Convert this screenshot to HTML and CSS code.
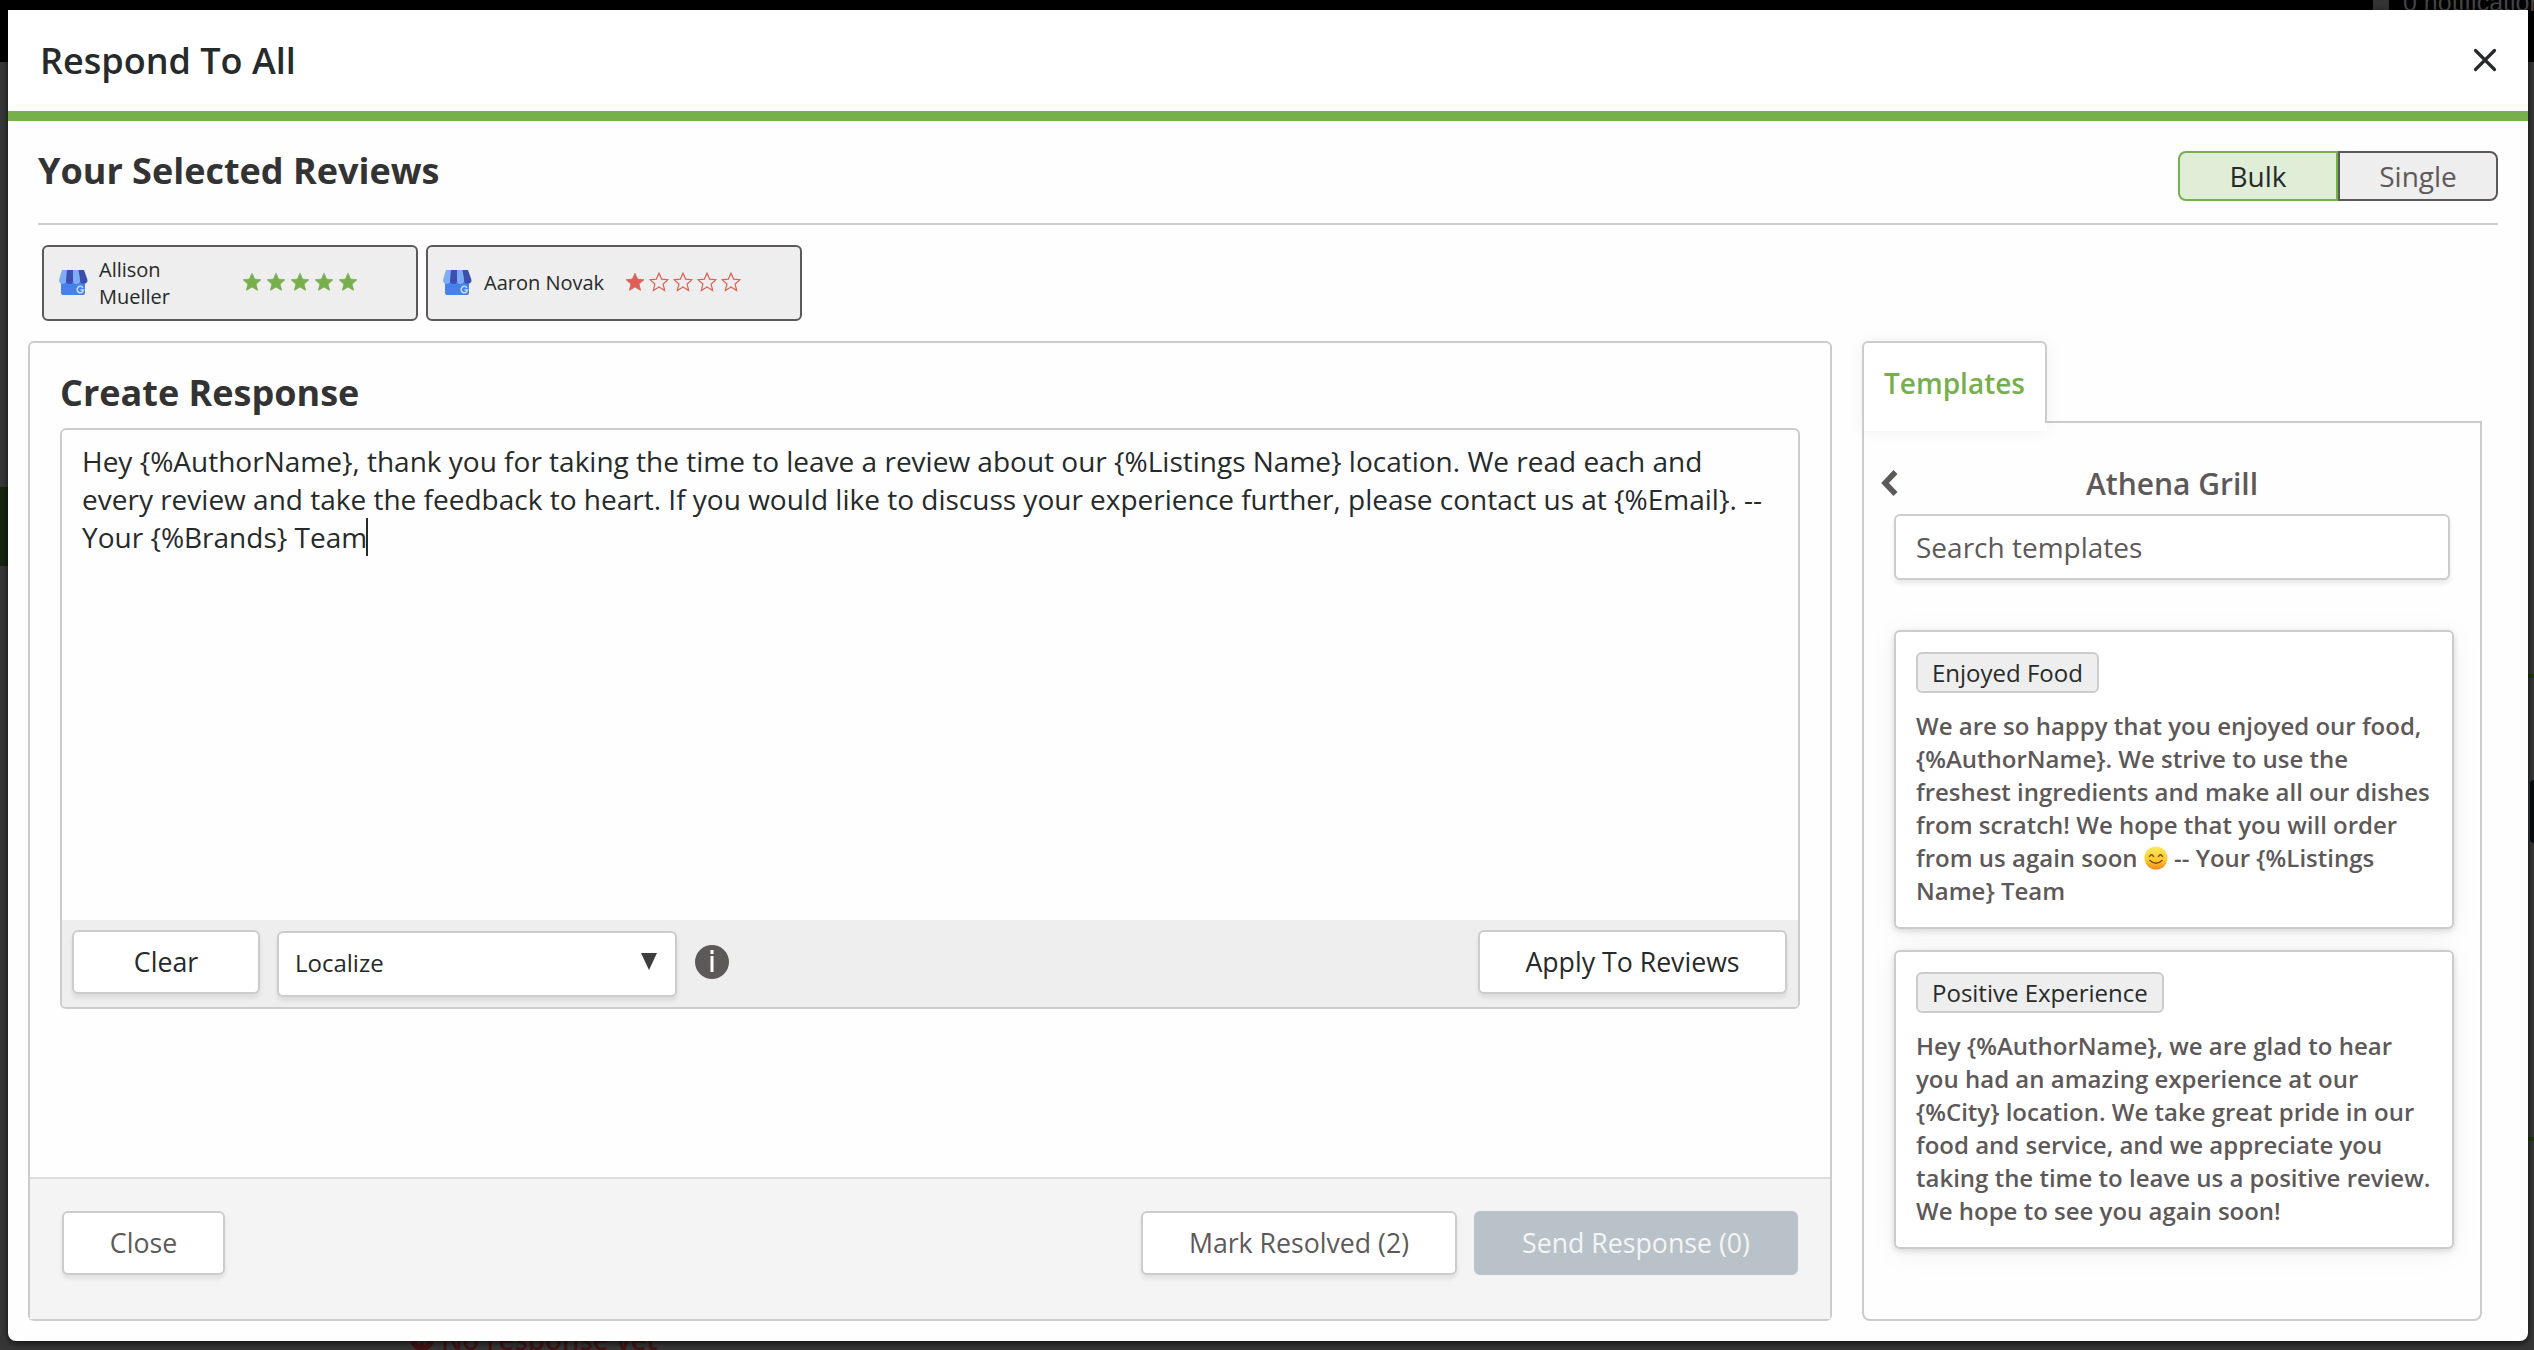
FILE: index.html
```html
<!DOCTYPE html>
<html lang="en">
<head>
    <meta charset="UTF-8">
    <meta name="viewport" content="width=device-width, initial-scale=1.0">
    <title>Respond To All</title>
    <link rel="stylesheet" href="styles.css">
</head>
<body>
    <!-- Shared icons -->
    <svg class="sprite" width="0" height="0">
        <symbol id="star" viewBox="0 0 20 20">
            <path d="M10 1.2l2.6 5.9 6.4.6-4.9 4.3 1.5 6.4L10 15l-5.6 3.4L5.900 12 1 7.700l6.400-.6z"/>
        </symbol>
        <symbol id="store" viewBox="0 0 30 27">
            <path d="M3 10h24v14a2 2 0 0 1-2 2H5a2 2 0 0 1-2-2z" fill="#4680ea"/>
            <path d="M4 1h6L8.500 11a3.700 3.700 0 0 1-7.500 0z" fill="#7facf5"/>
            <path d="M9 1h6v11a3.500 3.500 0 0 1-7-1z" fill="#3a4fb0"/>
            <path d="M15 1h6l1 10a3.500 3.500 0 0 1-7 1z" fill="#7facf5"/>
            <path d="M20.500 1H26l3.500 10a3.700 3.700 0 0 1-7.500 0z" fill="#3a4fb0"/>
            <path d="M25 18.800a3.200 3.200 0 1 0 .5 2.200h-3" fill="none" stroke="#c9dcfb" stroke-width="1.500"/>
        </symbol>
    </svg>

    <div class="backdrop">
        <div class="backdrop-nav"></div>
        <div class="backdrop-bell"></div>
        <div class="backdrop-note">0 notifications</div>
        <div class="backdrop-active"></div>
        <div class="backdrop-line first"></div>
        <div class="backdrop-button"></div>
        <div class="backdrop-line second"></div>
        <div class="backdrop-status">
            <svg width="24" height="24" viewBox="0 0 24 24"><circle cx="12" cy="12" r="12" fill="#401414"/><path d="M7.500 7.500l9 9M16.500 7.500l-9 9" stroke="#303030" stroke-width="4"/></svg>
            <span>No response yet</span>
        </div>
    </div>

    <div class="modal">
        <div class="modal-header">
            <h1>Respond To All</h1>
            <svg class="modal-close" width="24" height="24" viewBox="0 0 24 24"><path d="M2.500 2.500l19 19M21.500 2.500l-19 19"/></svg>
        </div>

        <div class="modal-body">
            <div class="reviews-header">
                <h2>Your Selected Reviews</h2>
                <div class="toggle">
                    <div class="toggle-item active">Bulk</div>
                    <div class="toggle-item">Single</div>
                </div>
            </div>

            <div class="chips">
                <div class="chip">
                    <svg class="chip-logo"><use href="#store"/></svg>
                    <div class="chip-name">Allison Mueller</div>
                    <div class="stars good">
                        <svg class="full"><use href="#star"/></svg>
                        <svg class="full"><use href="#star"/></svg>
                        <svg class="full"><use href="#star"/></svg>
                        <svg class="full"><use href="#star"/></svg>
                        <svg class="full"><use href="#star"/></svg>
                    </div>
                </div>
                <div class="chip">
                    <svg class="chip-logo"><use href="#store"/></svg>
                    <div class="chip-name">Aaron Novak</div>
                    <div class="stars bad">
                        <svg class="full"><use href="#star"/></svg>
                        <svg><use href="#star"/></svg>
                        <svg><use href="#star"/></svg>
                        <svg><use href="#star"/></svg>
                        <svg><use href="#star"/></svg>
                    </div>
                </div>
            </div>

            <div class="columns">
                <div class="response">
                    <div class="response-main">
                        <h2>Create Response</h2>
                        <div class="editor">
                            <div class="editor-text">Hey {%AuthorName}, thank you for taking the time to leave a review about our {%Listings Name} location. We read each and<br>every review and take the feedback to heart. If you would like to discuss your experience further, please contact us at {%Email}. --<br>Your {%Brands} Team<span class="caret"></span></div>
                            <div class="editor-toolbar">
                                <div class="btn btn-clear">Clear</div>
                                <div class="select">
                                    <span>Localize</span>
                                    <svg width="16" height="17" viewBox="0 0 16 17"><path d="M0 0h16L8 17z" fill="#3d3d3d"/></svg>
                                </div>
                                <svg class="info" width="34" height="34" viewBox="0 0 34 34"><circle cx="17" cy="17" r="17" fill="#5e5959"/><path d="M15.500 5h3v4h-3zM15.500 11h3v16h-3z" fill="#fff"/></svg>
                                <div class="btn btn-apply">Apply To Reviews</div>
                            </div>
                        </div>
                    </div>
                    <div class="response-footer">
                        <div class="btn btn-close">Close</div>
                        <div class="btn btn-resolve">Mark Resolved (2)</div>
                        <div class="btn btn-send">Send Response (0)</div>
                    </div>
                </div>

                <div class="side">
                    <div class="tab">Templates</div>
                    <div class="templates">
                        <div class="templates-header">
                            <svg width="20" height="28" viewBox="0 0 20 28"><path d="M15.500 3L5 14l10.500 11" fill="none" stroke="#5e5959" stroke-width="5.500"/></svg>
                            <span>Athena Grill</span>
                        </div>
                        <div class="search">Search templates</div>
                        <div class="template">
                            <div class="tag">Enjoyed Food</div>
                            <p>We are so happy that you enjoyed our food,<br>{%AuthorName}. We strive to use the<br>freshest ingredients and make all our dishes<br>from scratch! We hope that you will order<br>from us again soon <svg class="smile" viewBox="0 0 24 24"><defs><linearGradient id="face" x1="0" y1="0" x2="0" y2="1"><stop offset="0" stop-color="#ffe95a"/><stop offset=".6" stop-color="#fdc92f"/><stop offset="1" stop-color="#f08a1c"/></linearGradient></defs><circle cx="12" cy="12" r="11.500" fill="url(#face)"/><path d="M5.500 10.500q2-3.500 4 0M14.500 10.500q2-3.500 4 0M6 14.500q6 5.500 12 0" fill="none" stroke="#7a4a12" stroke-width="1.500" stroke-linecap="round"/></svg> -- Your {%Listings<br>Name} Team</p>
                        </div>
                        <div class="template">
                            <div class="tag">Positive Experience</div>
                            <p>Hey {%AuthorName}, we are glad to hear<br>you had an amazing experience at our<br>{%City} location. We take great pride in our<br>food and service, and we appreciate you<br>taking the time to leave us a positive review.<br>We hope to see you again soon!</p>
                        </div>
                    </div>
                </div>
            </div>
        </div>
    </div>
</body>
</html>
```
FILE: styles.css
```css
* {
    box-sizing: border-box;
}

body {
    font-family: "Open Sans", sans-serif;
    font-size: 28px;
    margin: 0;
    padding: 10px 6px 9px 8px;
    width: 2534px;
    height: 1350px;
    overflow: hidden;
    background-color: #363636;
    color: #262a2a;
}

h1, h2, p {
    margin: 0;
}

.sprite {
    position: absolute;
}

/* Dimmed page behind the dialog */
.backdrop {
    position: absolute;
    inset: 0;
    overflow: hidden;
}

.backdrop-nav {
    height: 62px;
    background-color: #000;
}

.backdrop-bell {
    position: absolute;
    left: 2373px;
    top: -6px;
    width: 16px;
    height: 18px;
    background-color: #333;
    border-radius: 6px 6px 0 0;
}

.backdrop-note {
    position: absolute;
    left: 2403px;
    top: -13px;
    font: 25px/30px "Liberation Sans", sans-serif;
    color: #444;
    white-space: nowrap;
}

.backdrop-active {
    position: absolute;
    left: 0;
    top: 487px;
    width: 8px;
    height: 79px;
    background-color: #162410;
}

.backdrop-line {
    position: absolute;
    right: 0;
    width: 6px;
    height: 4px;
    background-color: #1d3510;
}

.backdrop-line.first {
    top: 674px;
}

.backdrop-line.second {
    top: 1137px;
}

.backdrop-button {
    position: absolute;
    right: 0;
    top: 780px;
    width: 4px;
    height: 63px;
    background-color: #060c10;
    border-radius: 4px 0 0 4px;
}

.backdrop-status {
    position: absolute;
    left: 410px;
    top: 1323px;
    display: flex;
    align-items: center;
    gap: 7px;
    font: 600 27.6px/32px "Open Sans", sans-serif;
    color: #401414;
    white-space: nowrap;
}

.modal {
    position: relative;
    height: 1331px;
    background-color: #fefefe;
    border-radius: 0 0 8px 8px;
    box-shadow: 0 2px 6px rgba(0, 0, 0, 0.7);
}

.modal-header {
    display: flex;
    justify-content: space-between;
    align-items: center;
    height: 111px;
    padding: 0 31px 0 32px;
    background-color: #fff;
    border-bottom: 10px solid #76af4c;
}

.modal-header h1 {
    font-size: 36px;
    font-weight: 600;
}

.modal-close {
    margin-bottom: 2px;
    fill: none;
    stroke: #262a2a;
    stroke-width: 3.2;
    stroke-linecap: round;
}

.modal-body {
    padding: 0 30px 0 20px;
}

.reviews-header {
    display: flex;
    justify-content: space-between;
    height: 104px;
    margin-left: 10px;
    padding-top: 30px;
    border-bottom: 2px solid #ccc;
}

h2 {
    font-size: 36px;
    line-height: 50px;
    font-weight: 700;
    color: #333;
}

.reviews-header h2 {
    margin-top: -5px;
}

.toggle {
    display: flex;
    height: 50px;
}

.toggle-item {
    width: 160px;
    line-height: 46px;
    text-align: center;
    background-color: #eee;
    border: 2px solid #5e5959;
    border-radius: 0 8px 8px 0;
    color: #5e5959;
}

.toggle-item.active {
    background-color: #e1eed7;
    border-color: #76af4c;
    border-radius: 8px 0 0 8px;
    color: #262a2a;
}

.chips {
    display: flex;
    gap: 8px;
    padding: 20px 0 20px 14px;
}

.chip {
    display: flex;
    align-items: center;
    width: 376px;
    height: 76px;
    padding-left: 14px;
    background-color: #eee;
    border: 2px solid #5e5959;
    border-radius: 6px;
    font-size: 20px;
    line-height: 27px;
}

.chip-logo {
    width: 30px;
    height: 27px;
    margin-bottom: 2px;
}

.chip-name {
    width: 122px;
    margin: 0 0 1px 12px;
}

.chip:first-child .chip-name {
    width: 80px;
    margin: 0 63px 0 11px;
}

.stars {
    display: flex;
    gap: 4px;
    margin: 0 0 2px 19px;
}

.stars.good {
    margin-left: 0;
}

.stars svg {
    width: 20px;
    height: 20px;
    fill: none;
    stroke: currentColor;
    stroke-width: 1.2;
}

.stars.good {
    color: #76af4c;
}

.stars.bad {
    color: #dd5f58;
}

.stars .full {
    fill: currentColor;
    stroke-width: 0.7;
}

.columns {
    display: flex;
    gap: 30px;
}

.response {
    display: flex;
    flex-direction: column;
    width: 1804px;
    height: 980px;
    border: 2px solid #ccc;
    border-radius: 6px;
}

.response-main {
    flex: 1;
    padding: 25px 30px 0;
}

.editor {
    height: 581px;
    margin-top: 10px;
    display: flex;
    flex-direction: column;
    border: 2px solid #ccc;
    border-radius: 6px;
    overflow: hidden;
}

.editor-text {
    flex: 1;
    padding: 12px 20px 0;
    line-height: 38px;
    white-space: nowrap;
}

.caret {
    display: inline-block;
    width: 2px;
    height: 38px;
    margin-left: -1px;
    vertical-align: -8px;
    background-color: #262a2a;
}

.editor-toolbar {
    display: flex;
    align-items: flex-start;
    height: 87px;
    padding: 10px 11px 0 10px;
    background-color: #eee;
}

.btn {
    height: 64px;
    font-size: 26.7px;
    line-height: 60px;
    text-align: center;
    white-space: nowrap;
    background-color: #fff;
    border: 2px solid #ccc;
    border-radius: 6px;
    box-shadow: 0 4px 4px rgba(0, 0, 0, 0.08);
}

.btn-clear {
    width: 188px;
}

.select {
    display: flex;
    justify-content: space-between;
    width: 400px;
    height: 66px;
    margin: 1px 18px 0 17px;
    padding: 0 18px 0 16px;
    font-size: 24px;
    line-height: 60px;
    background-color: #fff;
    border: 2px solid #ccc;
    border-radius: 6px;
    box-shadow: 0 4px 4px rgba(0, 0, 0, 0.08);
}

.select svg {
    margin-top: 20px;
}

.info {
    margin-top: 15px;
}

.btn-apply {
    width: 309px;
    margin-left: auto;
}

.response-footer {
    display: flex;
    height: 142px;
    padding: 32px 32px 0;
    background-color: #f4f4f4;
    border-top: 2px solid #ddd;
    color: #5e5959;
}

.btn-close {
    width: 163px;
}

.btn-resolve {
    width: 316px;
    margin-left: auto;
}

.btn-send {
    width: 324px;
    margin-left: 17px;
    background-color: #b9c2c8;
    border-color: #b9c2c8;
    box-shadow: none;
    color: #f4f5f6;
}

.side {
    width: 620px;
}

.tab {
    position: relative;
    width: 185px;
    height: 90px;
    padding: 0 20px;
    line-height: 80px;
    font-weight: 600;
    color: #76af4c;
    background-color: #fff;
    border: 2px solid #ccc;
    border-bottom: none;
    border-radius: 6px 6px 0 0;
    box-shadow: 0 0 16px rgba(0, 0, 0, 0.06);
}

/* hides the tab side below the top edge of the panel */
.tab::after {
    content: "";
    position: absolute;
    left: 0;
    right: -2px;
    bottom: 0;
    height: 8px;
    background-color: #fff;
}

.templates {
    height: 900px;
    margin-top: -10px;
    padding: 35px 26px 0 30px;
    border: 2px solid #ccc;
    border-radius: 0 0 8px 8px;
}

.templates-header {
    display: flex;
    align-items: center;
    height: 50px;
    margin: 0 4px 6px -14px;
    font-size: 30px;
    font-weight: 600;
    color: #5e5959;
}

.templates-header span {
    flex: 1;
    padding-right: 6px;
    text-align: center;
}

.search {
    width: 556px;
    height: 66px;
    padding-left: 20px;
    line-height: 63px;
    background-color: #fff;
    border: 2px solid #ccc;
    border-radius: 6px;
    box-shadow: 0 4px 4px rgba(0, 0, 0, 0.08);
    color: #5e5959;
    margin-bottom: 50px;
}

.template {
    width: 560px;
    height: 299px;
    margin-bottom: 21px;
    padding: 20px;
    background-color: #fff;
    border: 2px solid #ccc;
    border-radius: 6px;
    box-shadow: 0 2px 6px rgba(0, 0, 0, 0.14), 0 4px 30px rgba(0, 0, 0, 0.05);
}

.tag {
    display: table;
    height: 41px;
    padding: 0 14px;
    font-size: 24px;
    line-height: 37px;
    background-color: #eee;
    border: 2px solid #ccc;
    border-radius: 6px;
}

.template p {
    margin-top: 16px;
    font-size: 24px;
    font-weight: 600;
    line-height: 33.1px;
    color: #5e5959;
    white-space: nowrap;
}

.smile {
    width: 24px;
    height: 24px;
    vertical-align: -3px;
}
```
